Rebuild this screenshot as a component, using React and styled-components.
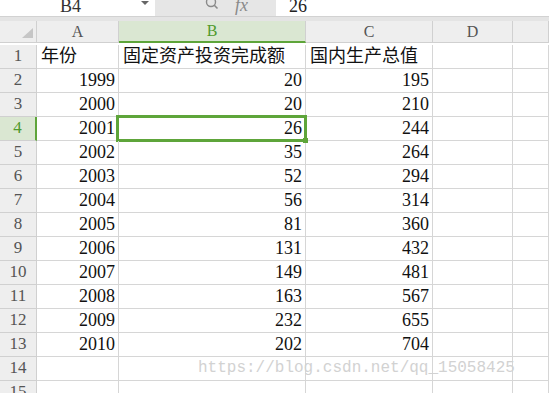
import React from 'react'
import styled, { createGlobalStyle } from 'styled-components'

const GlobalStyle = createGlobalStyle`
  body {
    margin: 0;
    background: #ffffff;
    overflow: hidden;
  }
`

const Page = styled.div`
  position: relative;
  width: 549px;
  height: 393px;
  overflow: hidden;
  font-family: "Liberation Serif", "Noto Sans CJK SC", serif;
  color: #111;
`

const FormulaBar = styled.div`
  display: flex;
  height: 16px;
  overflow: hidden;
  background: #e6e6e6;
`

const NameBox = styled.div`
  display: flex;
  align-items: flex-end;
  width: 155px;
  background: #fff;
`

const BarText = styled.span`
  flex: ${p => (p.$grow ? 1 : 'none')};
  text-align: ${p => (p.$center ? 'center' : 'left')};
  font-size: 18px;
  line-height: 18px;
  margin-bottom: 1px;
  color: ${p => p.$color || '#333'};
  padding-left: ${p => p.$pad || 0}px;
`

const Arrow = styled.span`
  width: 0;
  height: 0;
  margin: 0 6px 11px 0;
  border-left: 4px solid transparent;
  border-right: 4px solid transparent;
  border-top: 4px solid #666;
`

const Tools = styled.div`
  display: flex;
  align-items: flex-end;
  width: 120px;
  padding-left: 50px;
  gap: 16px;
  box-sizing: border-box;
`

const Fx = styled.span`
  font-style: italic;
  font-size: 18px;
  line-height: 18px;
  margin-bottom: 2px;
  color: #8a8a8a;
`

const Input = styled.div`
  flex: 1;
  display: flex;
  align-items: flex-end;
  background: #fff;
  margin-left: 1px;
`

const Strip = styled.div`
  height: 4px;
  background: #e4e4e4;
  border-top: 1px solid #d2d2d2;
`

const Sheet = styled.div`
  display: grid;
  grid-template-columns: 37px 82px 187px 127px 80px 1fr;
  grid-auto-rows: 24px;
`

const ColHead = styled.div`
  position: relative;
  height: 22px;
  box-sizing: border-box;
  display: flex;
  align-items: center;
  justify-content: center;
  font-size: 16px;
  background: ${p => (p.$active ? '#dae7d2' : '#eeeeee')};
  color: ${p => (p.$active ? '#4f9a2c' : '#555')};
  border-right: 1px solid #d0d0d0;
  border-bottom: ${p => (p.$active ? '2px solid #5ea53a' : '1px solid #d0d0d0')};
`

const Corner = styled.span`
  position: absolute;
  left: 22px;
  top: 7px;
  width: 11px;
  height: 10px;
  background: #c6c6c6;
  clip-path: polygon(100% 0, 100% 100%, 0 100%);
`

const RowHead = styled.div`
  box-sizing: border-box;
  display: flex;
  align-items: flex-end;
  justify-content: center;
  padding-bottom: 2px;
  font-size: 17px;
  background: ${p => (p.$active ? '#dae7d2' : '#eeeeee')};
  color: ${p => (p.$active ? '#4f9a2c' : '#555')};
  border-bottom: 1px solid #d0d0d0;
  border-right: ${p => (p.$active ? '2px solid #5ea53a' : '1px solid #d0d0d0')};
`

const Cell = styled.div`
  position: relative;
  box-sizing: border-box;
  display: flex;
  align-items: flex-end;
  justify-content: ${p => (p.$num ? 'flex-end' : 'flex-start')};
  padding: 0 3px 2px 4px;
  font-size: 18px;
  line-height: 20px;
  white-space: nowrap;
  border-right: 1px solid #d6d6d6;
  border-bottom: 1px solid #d6d6d6;

  ${p =>
    p.$selected &&
    `
    &::after {
      content: '';
      position: absolute;
      top: -2px;
      left: -3px;
      right: -2px;
      bottom: -2px;
      border: 3px solid #5ea53a;
    }
    &::before {
      content: '';
      position: absolute;
      right: -3px;
      bottom: -3px;
      width: 5px;
      height: 5px;
      background: #5ea53a;
      z-index: 1;
    }
  `}
`

const Watermark = styled.div`
  position: absolute;
  left: 198px;
  top: 359px;
  font-family: "Liberation Mono", monospace;
  font-size: 16px;
  color: #d2d2d2;
  white-space: nowrap;
`

const rows = [
  ['1999', '20', '195'],
  ['2000', '20', '210'],
  ['2001', '26', '244'],
  ['2002', '35', '264'],
  ['2003', '52', '294'],
  ['2004', '56', '314'],
  ['2005', '81', '360'],
  ['2006', '131', '432'],
  ['2007', '149', '481'],
  ['2008', '163', '567'],
  ['2009', '232', '655'],
  ['2010', '202', '704'],
]

function Magnifier() {
  return (
    <svg width="14" height="12" viewBox="0 0 14 12" style={{ marginBottom: 4 }}>
      <circle cx="6" cy="2" r="4.5" fill="none" stroke="#8a8a8a" strokeWidth="1.4" />
      <path d="M9.3 5.3 L12.5 8.5" stroke="#8a8a8a" strokeWidth="1.6" />
    </svg>
  )
}

export default function App() {
  const body = [
    ['年份', '固定资产投资完成额', '国内生产总值'],
    ...rows,
    ['', '', ''],
    ['', '', ''],
  ]

  return (
    <Page>
      <GlobalStyle />
      <FormulaBar>
        <NameBox>
          <BarText $grow $center>B4</BarText>
          <Arrow />
        </NameBox>
        <Tools>
          <Magnifier />
          <Fx>fx</Fx>
        </Tools>
        <Input>
          <BarText $pad={13} $color="#222">26</BarText>
        </Input>
      </FormulaBar>
      <Strip />
      <Sheet>
        <ColHead><Corner /></ColHead>
        <ColHead>A</ColHead>
        <ColHead $active>B</ColHead>
        <ColHead>C</ColHead>
        <ColHead>D</ColHead>
        <ColHead />
        {body.map((r, i) => (
          <React.Fragment key={i}>
            <RowHead $active={i === 3}>{i + 1}</RowHead>
            <Cell $num={i > 0}>{r[0]}</Cell>
            <Cell $num={i > 0} $selected={i === 3}>{r[1]}</Cell>
            <Cell $num={i > 0}>{r[2]}</Cell>
            <Cell />
            <Cell />
          </React.Fragment>
        ))}
      </Sheet>
      <Watermark>https://blog.csdn.net/qq_15058425</Watermark>
    </Page>
  )
}
